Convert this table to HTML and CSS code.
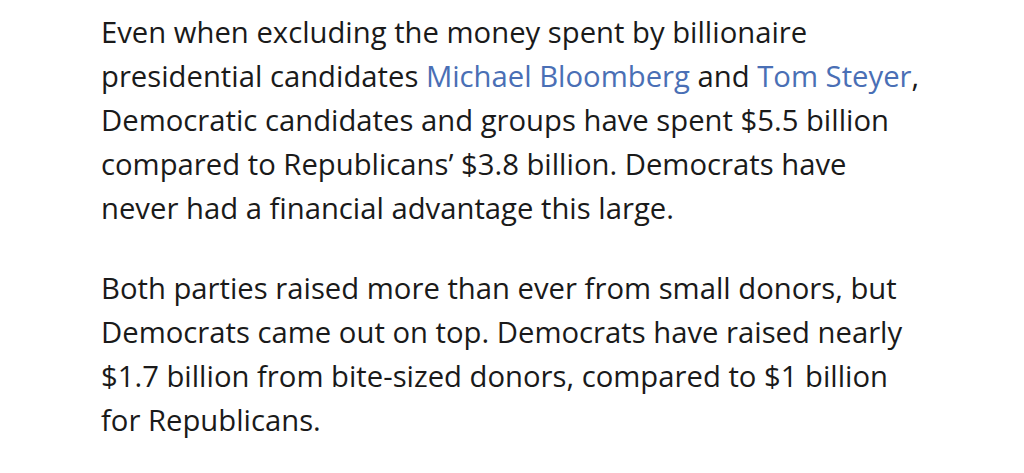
FILE: index.html
```html
<!DOCTYPE html>
<html lang="en">
<head>
<meta charset="utf-8">
<link rel="stylesheet" href="styles.css">
</head>
<body>
<main class="article">
<p class="para">Even when excluding the money spent by billionaire presidential candidates <a class="link" href="#">Michael Bloomberg</a> and <a class="link" href="#">Tom Steyer</a>, Democratic candidates and groups have spent $5.5 billion compared to Republicans’ $3.8 billion. Democrats have never had a financial advantage this large.</p>
<p class="para">Both parties raised more than ever from small donors, but Democrats came out on top. Democrats have raised nearly $1.7 billion from bite-sized donors, compared to $1 billion for Republicans.</p>
</main>
</body>
</html>
```
FILE: styles.css
```css
html, body {
  margin: 0;
  padding: 0;
  background: #ffffff;
}
.article {
  padding: 10px 0 0 101px;
  width: 820px;
  font-family: "Open Sans", sans-serif;
  font-size: 29.25px;
  line-height: 44px;
  color: #1a1a1a;
}
.para {
  margin: 0 0 36px 0;
}
.link {
  color: #4a6fb5;
  text-decoration: none;
}
```
